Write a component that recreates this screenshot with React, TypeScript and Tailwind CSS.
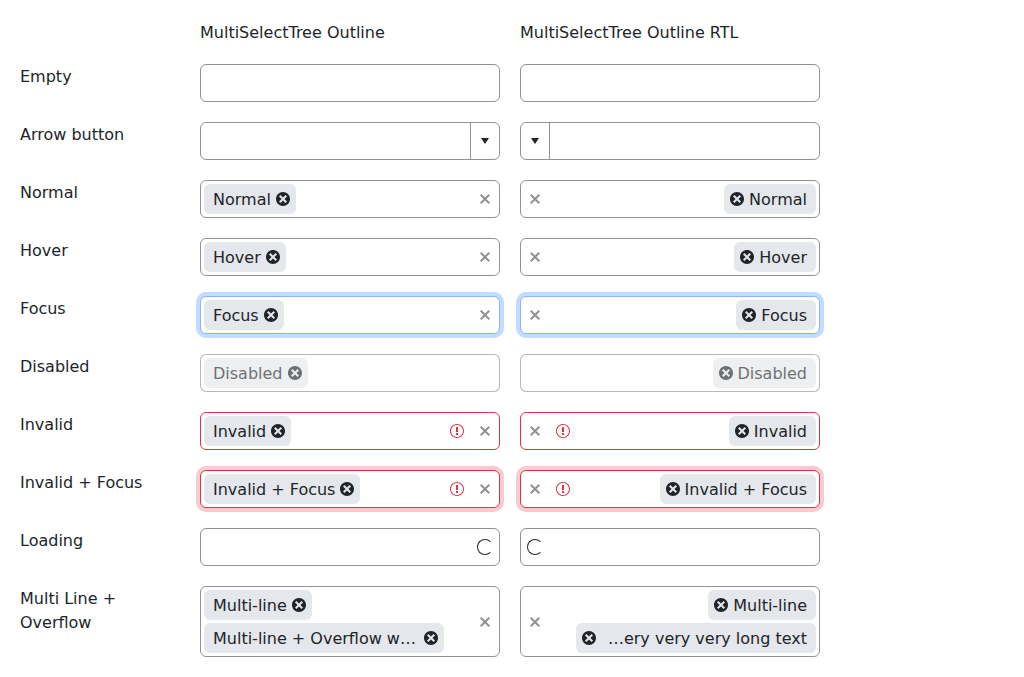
import React from 'react';
import { clsx } from 'clsx';

type Row = {
  label: string;
  chips?: string[];
  rtlChips?: string[];
  arrow?: boolean;
  clear?: boolean;
  invalid?: boolean;
  focus?: boolean;
  disabled?: boolean;
  loading?: boolean;
};

const rows: Row[] = [
  { label: 'Empty' },
  { label: 'Arrow button', arrow: true },
  { label: 'Normal', chips: ['Normal'], clear: true },
  { label: 'Hover', chips: ['Hover'], clear: true },
  { label: 'Focus', chips: ['Focus'], clear: true, focus: true },
  { label: 'Disabled', chips: ['Disabled'], disabled: true },
  { label: 'Invalid', chips: ['Invalid'], clear: true, invalid: true },
  { label: 'Invalid + Focus', chips: ['Invalid + Focus'], clear: true, invalid: true, focus: true },
  { label: 'Loading', loading: true },
  {
    label: 'Multi Line + Overflow',
    chips: ['Multi-line', 'Multi-line + Overflow w…'],
    rtlChips: ['Multi-line', '…ery very very long text'],
    clear: true,
  },
];

function Icon({ d, className }: { d: string; className?: string }) {
  return (
    <svg viewBox="0 0 512 512" className={clsx('size-4 shrink-0', className)} fill="currentColor" aria-hidden="true">
      <path d={d} />
    </svg>
  );
}

const xPath =
  'M416 141.3 370.7 96 256 210.7 141.3 96 96 141.3 210.7 256 96 370.7l45.3 45.3L256 301.3 370.7 416l45.3-45.3L301.3 256z';
const xCirclePath =
  'M256 32C132.3 32 32 132.3 32 256s100.3 224 224 224 224-100.3 224-224S379.7 32 256 32m128 306.7L338.7 384 256 301.3 173.3 384 128 338.7l82.7-82.7-82.7-82.7 45.3-45.3 82.7 82.7 82.7-82.7 45.3 45.3-82.7 82.7z';
const alertPath =
  'M256 64c106 0 192 86 192 192s-86 192-192 192S64 362 64 256 150 64 256 64m0-32C132.3 32 32 132.3 32 256s100.3 224 224 224 224-100.3 224-224S379.7 32 256 32m32 288h-64v64h64zm0-192h-64v160h64z';
const caretPath = 'm256 352 128-192H128z';

function Chip({ text, disabled }: { text: string; disabled?: boolean }) {
  const long = text.includes('…');
  return (
    <span
      className={clsx(
        'flex h-[30px] items-center rounded-md bg-[#e4e7eb] ps-[9px] pe-[5px]',
        long && 'w-[240px] justify-between',
        disabled ? 'gap-1 opacity-65 rtl:gap-[3px]' : 'gap-1',
      )}
    >
      <bdi dir="ltr" className="-mb-px pt-px whitespace-nowrap">{text}</bdi>
      <Icon d={xCirclePath} />
    </span>
  );
}

function Field({ row, rtl }: { row: Row; rtl?: boolean }) {
  const chips = (rtl && row.rtlChips) || row.chips || [];
  return (
    <div
      dir={rtl ? 'rtl' : 'ltr'}
      className={clsx(
        'flex min-h-[38px] w-[300px] items-stretch rounded-md border bg-white',
        row.invalid
          ? 'border-[#dc3545]'
          : row.focus
            ? 'border-[#86b7fe]'
            : row.disabled
              ? 'border-[#909294]/65'
              : 'border-[#909294]',
        row.focus && (row.invalid ? 'ring-4 ring-[#dc3545]/25' : 'ring-4 ring-[#0d6efd]/25'),
      )}
    >
      <div className="flex flex-1 flex-col items-start gap-[3px] p-[3px]">
        {chips.map((text) => (
          <Chip key={text} text={text} disabled={row.disabled} />
        ))}
      </div>
      {(row.clear || row.loading) && (
        <div className="flex items-center gap-3 pe-[6px]">
          {row.invalid && <Icon d={alertPath} className="text-[#dc3545]" />}
          {row.clear && <Icon d={xPath} className="text-[#909294]" />}
          {row.loading && <span className="size-4 rounded-full border border-[#212529] border-r-transparent" />}
        </div>
      )}
      {row.arrow && (
        <div className="flex w-[29px] items-center justify-center border-s border-[#909294]">
          <Icon d={caretPath} />
        </div>
      )}
    </div>
  );
}

export default function App() {
  return (
    <main className="grid h-[677px] grid-cols-[160px_300px_300px] content-start items-start gap-5 bg-white p-5 font-['DejaVu_Sans',sans-serif] text-base text-[#212529]">
      <span />
      <span className="-mb-px pt-px">MultiSelectTree Outline</span>
      <span className="-mb-px pt-px">MultiSelectTree Outline RTL</span>
      {rows.map((row) => (
        <React.Fragment key={row.label}>
          <span className="-mb-px pt-px pe-5">{row.label}</span>
          <Field row={row} />
          <Field row={row} rtl />
        </React.Fragment>
      ))}
    </main>
  );
}
